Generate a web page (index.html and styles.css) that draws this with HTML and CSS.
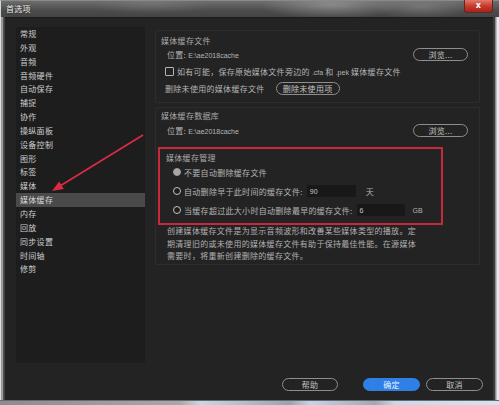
FILE: index.html
```html
<!DOCTYPE html>
<html lang="zh-CN">
<head>
<meta charset="utf-8">
<title>首选项</title>
<link rel="stylesheet" href="styles.css">
</head>
<body>
<div class="window">
  <div class="titlebar">
    <span class="title">首选项</span>
    <div class="close">x</div>
  </div>
  <div class="frame-mid">
    <div class="client">
      <div class="content">
        <ul class="nav">
          <li>常规</li>
          <li>外观</li>
          <li>音频</li>
          <li>音频硬件</li>
          <li>自动保存</li>
          <li>捕捉</li>
          <li>协作</li>
          <li>操纵面板</li>
          <li>设备控制</li>
          <li>图形</li>
          <li>标签</li>
          <li>媒体</li>
          <li class="active">媒体缓存</li>
          <li>内存</li>
          <li>回放</li>
          <li>同步设置</li>
          <li>时间轴</li>
          <li>修剪</li>
        </ul>
        <div class="main">
          <section class="group g1">
            <div class="group-title">媒体缓存文件</div>
            <div class="row">
              <span class="loc">位置: <span class="latin">E:\ae2018cache</span></span>
              <span class="pill push">浏览...</span>
            </div>
            <div class="row gap">
              <span class="check"></span>
              <span>如有可能，保存原始媒体文件旁边的 <span class="latin">.cfa</span> 和 <span class="latin">.pek</span> 媒体缓存文件</span>
            </div>
            <div class="row gap">
              <span>删除未使用的媒体缓存文件</span>
              <span class="pill wide">删除未使用项</span>
            </div>
          </section>
          <section class="group g2">
            <div class="group-title">媒体缓存数据库</div>
            <div class="row tight">
              <span class="loc">位置: <span class="latin">E:\ae2018cache</span></span>
              <span class="pill push">浏览...</span>
            </div>
            <div class="manage">
              <div class="group-title">媒体缓存管理</div>
              <div class="row radio-row first">
                <span class="radio on"></span>
                <span>不要自动删除缓存文件</span>
              </div>
              <div class="row radio-row">
                <span class="radio"></span>
                <span>自动删除早于此时间的缓存文件:</span>
                <span class="field days"><span class="latin">90</span></span>
                <span class="unit">天</span>
              </div>
              <div class="row radio-row">
                <span class="radio"></span>
                <span>当缓存超过此大小时自动删除最早的缓存文件:</span>
                <span class="field size"><span class="latin">6</span></span>
                <span class="unit latin">GB</span>
              </div>
            </div>
            <p class="note">创建媒体缓存文件是为显示音频波形和改善某些媒体类型的播放。定<br>期清理旧的或未使用的媒体缓存文件有助于保持最佳性能。在源媒体<br>需要时，将重新创建删除的缓存文件。</p>
          </section>
        </div>
      </div>
      <div class="footer">
        <span class="pill btn help">帮助</span>
        <span class="pill btn primary">确定</span>
        <span class="pill btn">取消</span>
      </div>
    </div>
  </div>
  <div class="frame-bottom"></div>
  <svg class="arrow" width="499" height="405" viewBox="0 0 499 405">
    <line x1="143" y1="135" x2="60" y2="186" stroke="#dc2c44" stroke-width="1.6"/>
    <polygon points="52,191 63.8,188.9 59.1,181.6" fill="#dc2c44"/>
  </svg>
</div>
</body>
</html>
```

FILE: styles.css
```css
* { box-sizing: border-box; margin: 0; padding: 0; }

html, body {
  width: 499px;
  height: 405px;
  overflow: hidden;
  background: #c9cdd2;
}

body {
  font-family: "Noto Sans CJK SC", "Noto Sans", sans-serif;
  font-size: 8px;
  letter-spacing: 0.3px;
  color: #b4b4b4;
}

.latin {
  font-family: "Liberation Sans", Arial, sans-serif;
  font-size: 7px;
  letter-spacing: 0;
}

.window {
  position: relative;
  width: 499px;
  height: 405px;
  display: flex;
  flex-direction: column;
  background: #4a4a4a;
}

/* title bar with aero-style blurred glass */
.titlebar {
  height: 17px;
  display: flex;
  align-items: center;
  position: relative;
  border-top: 1px solid #8a8a8a;
  border-left: 1px solid #d4d4d4;
  background:
    radial-gradient(ellipse 70px 14px at 330px 4px, rgba(170,170,170,0.55), rgba(170,170,170,0) 100%),
    radial-gradient(ellipse 50px 12px at 420px 6px, rgba(150,150,150,0.45), rgba(150,150,150,0) 100%),
    radial-gradient(ellipse 60px 10px at 150px 3px, rgba(140,140,140,0.35), rgba(140,140,140,0) 100%),
    linear-gradient(#6e6e6e, #4c4c4c 60%, #444444);
}

.title {
  margin-left: 5px;
  color: #ececec;
  font-size: 8px;
  line-height: 1;
  text-shadow: 0 0 3px rgba(0,0,0,0.6);
}

.close {
  position: absolute;
  top: -1px;
  right: 6px;
  width: 29px;
  height: 13px;
  border: 1px solid #5a2a2a;
  border-top: none;
  border-radius: 0 0 3px 3px;
  background: linear-gradient(#e07a6a, #c83a2c 50%, #a82418);
  color: #fff;
  font-family: "DejaVu Sans", sans-serif;
  font-weight: bold;
  font-size: 8px;
  line-height: 11px;
  text-align: center;
}

.frame-mid {
  height: 383px;
  display: flex;
  padding-left: 5px;
  padding-right: 6px;
  background:
    linear-gradient(to right, #e0e0e0 0, #e0e0e0 1px, #9a9a9a 1px, #9a9a9a 3px, #5a5a5a 3px, #3a3a3a 5px, transparent 5px),
    linear-gradient(to left, #e4e8ee 0, #e4e8ee 2px, #b8bcc2 2px, #b8bcc2 3px, #8c8c8c 3px, #8c8c8c 4px, #3a3a3a 4px);
}

.client {
  width: 488px;
  height: 383px;
  background: #232323;
  border-top: 1px solid #1a1a1a;
  display: flex;
  flex-direction: column;
}

.content {
  flex: 1;
  display: flex;
  padding: 9px 0 0 11px;
}

/* category list */
.nav {
  list-style: none;
  width: 129px;
  background: #1d1d1d;
  color: #cdcdcd;
}

.nav li {
  height: 13.85px;
  line-height: 13.85px;
  padding-left: 4px;
  white-space: nowrap;
}

.nav li.active {
  background: #4a4a4a;
  color: #d8d8d8;
}

.main {
  padding: 3px 0 0 10px;
}

.group {
  width: 325px;
  border: 1px solid #2d2d2d;
  border-radius: 2px;
  padding-left: 5px;
}

.g1 {
  padding-top: 3px;
  padding-bottom: 7px;
}

.g2 {
  margin-top: 4px;
  padding-top: 1px;
  padding-bottom: 1px;
}

.group-title {
  height: 13px;
  line-height: 13px;
  color: #aaaaaa;
}

.row {
  height: 14px;
  display: flex;
  align-items: center;
  padding-left: 4px;
  white-space: nowrap;
}

.row.gap { margin-top: 3px; }
.row.tight { margin-top: 1px; }

.loc { padding-left: 2px; }

.pill {
  display: inline-flex;
  align-items: center;
  justify-content: center;
  height: 13px;
  border: 1px solid #8e8e8e;
  border-radius: 7px;
  color: #c2c2c2;
}

.push {
  width: 55px;
  margin-left: auto;
  margin-right: 11px;
}

.wide {
  width: 64px;
  margin-left: 11px;
}

.check {
  width: 9px;
  height: 9px;
  border: 1px solid #b4b4b4;
  border-radius: 1px;
  margin-right: 3px;
}

/* cache management block, framed in red */
.manage {
  width: 285px;
  margin-top: 10px;
  margin-left: -3px;
  border: 2px solid #c8283c;
  padding: 2px 0 6px 6px;
}

.radio-row { margin-top: 5px; padding-left: 7px; }
.radio-row.first { margin-top: 1px; }

.radio {
  width: 8px;
  height: 8px;
  border-radius: 50%;
  border: 1.5px solid #c4c4c4;
  background: #1e1e1e;
  margin-right: 3px;
}

.radio.on {
  border-color: #9c9c9c;
  background: #a8a8a8;
}

.field {
  height: 12px;
  background: #181818;
  display: inline-flex;
  align-items: center;
  padding-left: 3px;
  color: #c8c8c8;
}

.days { width: 49px; margin-left: 4px; }
.size { width: 48px; margin-left: 4px; }

.unit { margin-left: 10px; }
.unit.latin { margin-left: 8px; }

.note {
  margin: 0 0 0 6px;
  line-height: 12.5px;
  white-space: nowrap;
  color: #b0b0b0;
}

.footer {
  height: 37px;
  display: flex;
  align-items: flex-end;
  justify-content: flex-end;
  padding: 0 10px 9px 0;
}

.btn {
  width: 57px;
  margin-left: 6px;
}

.btn.help {
  width: 56px;
  margin-right: 19px;
}

.btn.primary {
  background: #2f80e4;
  border-color: #2f80e4;
  color: #eaf2ff;
}

.frame-bottom {
  height: 5px;
  border-top: 1px solid #6a6a6a;
  background: linear-gradient(to right, #8c8c8c 0, #a8a8a8 180px, #c8d6e8 200px, #9aa4b0 290px, #c4d4ea 310px, #a0a8b4 375px, #cad8ec 395px, #d8e2f0 100%);
}

.arrow {
  position: absolute;
  left: 0;
  top: 0;
  pointer-events: none;
}
```
